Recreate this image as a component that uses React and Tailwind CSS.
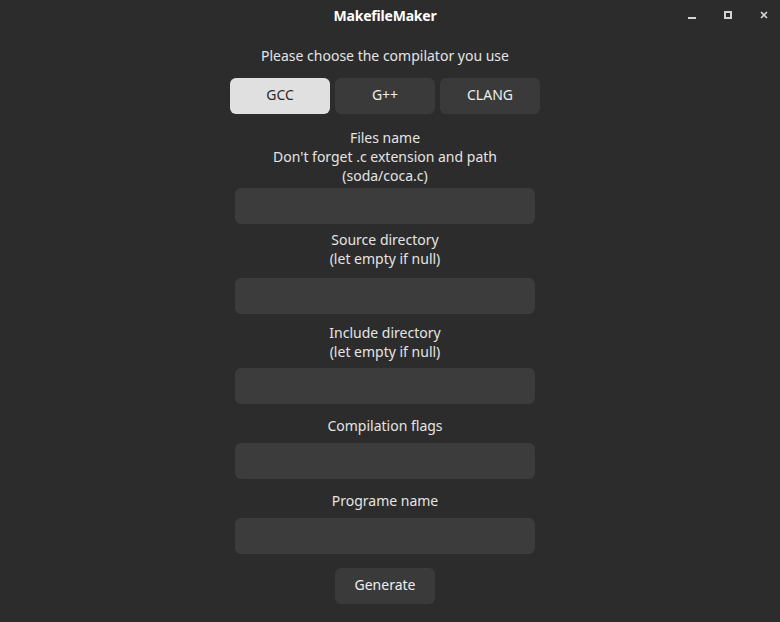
import React, { useState } from 'react';

const fieldClass = "w-[300px] h-[36px] rounded-[6px] bg-[#3c3c3c] text-[#eeeeee] px-3 outline-none";
const btnBase = "w-[100px] h-[36px] rounded-[6px] pb-[3px]";

const App = () => {
    const [compiler, setCompiler] = useState('GCC');
    const compilers = ['GCC', 'G++', 'CLANG'];

    return (
        <div
            className="w-[780px] h-[622px] bg-[#2c2c2c] text-[#e4e4e4] text-[14px] leading-[19px] overflow-hidden"
            style={{ fontFamily: '"Noto Sans", "Open Sans", sans-serif' }}
        >
            {/* header bar */}
            <div className="relative h-[30px] flex items-center justify-center pr-[10px]">
                <span className="text-[14px] font-bold text-white tracking-[-0.2px]">MakefileMaker</span>
                <div className="absolute right-0 top-0 h-[30px] flex items-center">
                    <svg width="8" height="8" viewBox="0 0 8 8" className="absolute left-[-92px] top-[11px]">
                        <rect x="0" y="6" width="8" height="2" fill="#d4d4d4" />
                    </svg>
                    <svg width="8" height="8" viewBox="0 0 8 8" className="absolute left-[-56px] top-[11px]">
                        <rect x="1" y="1" width="6" height="6" fill="none" stroke="#d4d4d4" strokeWidth="2" />
                    </svg>
                    <svg width="8" height="8" viewBox="0 0 8 8" className="absolute left-[-20px] top-[11px]">
                        <path d="M1 1 L7 7 M7 1 L1 7" stroke="#d4d4d4" strokeWidth="1.6" />
                    </svg>
                </div>
            </div>

            <div className="flex flex-col items-center pr-[10px]">
                <p className="mt-[16px] text-center">Please choose the compilator you use</p>

                <div className="mt-[13px] flex gap-[5px]">
                    {compilers.map((c) => (
                        <button
                            key={c}
                            onClick={() => setCompiler(c)}
                            className={
                                compiler === c
                                    ? `${btnBase} bg-[#e0e0e0] text-[#2a2a2a]`
                                    : `${btnBase} bg-[#3a3a3a] text-[#eeeeee]`
                            }
                        >
                            {c}
                        </button>
                    ))}
                </div>

                <p className="mt-[14px] text-center">
                    Files name<br />Don't forget .c extension and path<br />(soda/coca.c)
                </p>
                <input className={`mt-[3px] ${fieldClass}`} />

                <p className="mt-[6px] text-center">
                    Source directory<br />(let empty if null)
                </p>
                <input className={`mt-[10px] ${fieldClass}`} />

                <p className="mt-[9px] text-center">
                    Include directory<br />(let empty if null)
                </p>
                <input className={`mt-[7px] ${fieldClass}`} />

                <p className="mt-[12px] text-center">Compilation flags</p>
                <input className={`mt-[8px] ${fieldClass}`} />

                <p className="mt-[12px] text-center">Programe name</p>
                <input className={`mt-[8px] ${fieldClass}`} />

                <button className={`mt-[14px] ${btnBase} bg-[#3a3a3a] text-[#eeeeee]`}>
                    Generate
                </button>
            </div>
        </div>
    );
};

export default App;
